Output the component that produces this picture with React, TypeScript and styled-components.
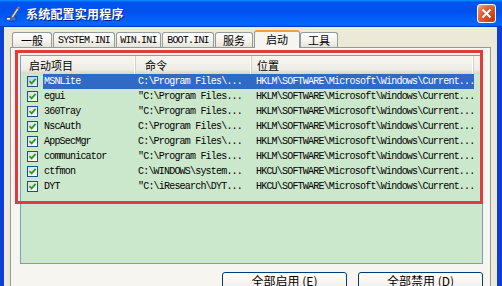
import * as React from 'react';
import styled, {createGlobalStyle, css} from 'styled-components';

const CJK = '"Noto Sans CJK SC", "Liberation Sans", sans-serif';
const MONO = '"Liberation Mono", "Noto Sans CJK SC", monospace';

const GlobalStyle = createGlobalStyle`
    html, body {
        margin: 0;
        padding: 0;
        background: #ffffff;
    }
    body {
        font-family: ${CJK};
    }
`;

const Window = styled.div`
    width: 502px;
    height: 286px;
    overflow: hidden;
    display: flex;
    flex-direction: column;
`;

const TitleBar = styled.div`
    height: 27px;
    flex-shrink: 0;
    display: flex;
    align-items: center;
    gap: 5px;
    padding: 0 6px 0 5px;
    box-sizing: border-box;
    background: linear-gradient(
        180deg,
        #0997ff 0%,
        #0053ee 8%,
        #0050ee 40%,
        #0066ff 88%,
        #0066ff 93%,
        #005bff 95%,
        #003dd7 96%,
        #003dd7 100%
    );
`;

const Title = styled.span`
    flex: 1;
    color: #ffffff;
    font: bold 12px ${CJK};
    text-shadow: 1px 1px 0 #0a1c7e;
    letter-spacing: 0.2px;
`;

const CloseButton = styled.div`
    width: 19px;
    height: 19px;
    box-sizing: border-box;
    border: 1px solid #ffffff;
    border-radius: 3px;
    display: flex;
    align-items: center;
    justify-content: center;
    background: radial-gradient(circle at 85% 85%, #c43a0e 0%, #dc5a2e 55%, #e5835d 80%, #f6c1a8 100%);
`;

const Frame = styled.div`
    flex: 1;
    min-height: 0;
    display: flex;
    flex-direction: column;
    background: #ece9d8;
    border-left: 4px solid #0b3fd6;
    border-right: 5px solid #0b3fd6;
    padding: 3px 6px 0 6px;
`;

const TabStrip = styled.div`
    height: 18px;
    display: flex;
    align-items: flex-end;
    padding-left: 2px;
    margin-bottom: -1px;
    position: relative;
    z-index: 1;
`;

const Tab = styled.div<{$w: number; $active?: boolean; $mono?: boolean; $gap?: number}>`
    width: ${(p) => p.$w}px;
    margin-right: ${(p) => (p.$gap ?? 1)}px;
    box-sizing: border-box;
    border: 1px solid #919b9c;
    border-radius: 3px 3px 0 0;
    display: flex;
    align-items: center;
    justify-content: center;
    color: #000000;
    font: ${(p) => (p.$mono ? `10px ${MONO}` : `11px ${CJK}`)};
    letter-spacing: ${(p) => (p.$mono ? '-0.8px' : '0')};
    ${(p) =>
        p.$active
            ? css`
                  height: 18px;
                  border-bottom: none;
                  border-top: 2px solid #f0a22e;
                  background: #f6f5ef;
                  padding-bottom: 2px;
              `
            : css`
                  height: 15px;
                  margin-bottom: 1px;
                  border-bottom: none;
                  background: linear-gradient(180deg, #ffffff 0%, #f3f2ec 60%, #e6e4da 100%);
              `}
`;

const Panel = styled.div`
    flex: 1;
    position: relative;
    border: 1px solid #919b9c;
    border-bottom: none;
    background: #f6f5ef;
    padding: 7px 7px 0 9px;
    display: flex;
    flex-direction: column;
`;

const Highlight = styled.div`
    position: absolute;
    left: 4px;
    top: 2px;
    width: 468px;
    height: 154px;
    box-sizing: border-box;
    border: 3px solid #e23b3b;
    pointer-events: none;
`;

const List = styled.div`
    height: 209px;
    box-sizing: border-box;
    border: 1px solid #7f9db9;
    background: #cce8cc;
`;

const Header = styled.div`
    display: grid;
    grid-template-columns: 115px 116px 222px 1fr;
    height: 18px;
    background: linear-gradient(180deg, #f7f6f1 0%, #eeede4 75%, #d8d4c5 100%);
`;

const HeaderCell = styled.div<{$pad: number}>`
    padding-left: ${(p) => p.$pad}px;
    font: 11px ${CJK};
    line-height: 18px;
    color: #000000;
    border-right: 1px solid #d6d2c2;
    box-shadow: inset -1px 0 0 #ffffff;
`;

const Row = styled.div`
    display: flex;
    height: 15px;
`;

const CheckSlot = styled.div`
    width: 22px;
    padding-left: 6px;
    box-sizing: border-box;
    display: flex;
    align-items: center;
`;

const CheckBox = styled.div<{$focus?: boolean}>`
    width: 11px;
    height: 11px;
    box-sizing: border-box;
    border: 1px solid #1c5180;
    display: flex;
    align-items: center;
    justify-content: center;
    background: ${(p) =>
        p.$focus ? 'linear-gradient(135deg, #b9cde0, #e8eef5)' : 'linear-gradient(135deg, #dcdcd7, #ffffff)'};
`;

const Cells = styled.div<{$selected?: boolean}>`
    display: grid;
    grid-template-columns: 93px 116px 222px;
    background: ${(p) => (p.$selected ? '#316ac5' : 'transparent')};
    color: ${(p) => (p.$selected ? '#ffffff' : '#000000')};
`;

const Cell = styled.div<{$pad: number}>`
    padding-left: ${(p) => p.$pad}px;
    font: 10px ${MONO};
    letter-spacing: -0.8px;
    line-height: 15px;
    white-space: nowrap;
    overflow: hidden;
`;

const ButtonRow = styled.div`
    display: flex;
    justify-content: flex-end;
    gap: 11px;
    margin-top: 8px;
`;

const Button = styled.div`
    width: 125px;
    height: 23px;
    box-sizing: border-box;
    border: 1px solid #003c74;
    border-radius: 3px;
    background: linear-gradient(180deg, #ffffff 0%, #f1efe8 70%, #d9d4c8 100%);
    display: flex;
    align-items: center;
    justify-content: center;
    padding-bottom: 5px;
    font: 12px ${CJK};
    line-height: 14px;
    color: #000000;
    u {
        text-decoration: underline;
    }
`;

const rows = [
    ['MSNLite', 'C:\\Program Files\\...', 'HKLM\\SOFTWARE\\Microsoft\\Windows\\Current...'],
    ['egui', '"C:\\Program Files...', 'HKLM\\SOFTWARE\\Microsoft\\Windows\\Current...'],
    ['360Tray', '"C:\\Program Files...', 'HKLM\\SOFTWARE\\Microsoft\\Windows\\Current...'],
    ['NscAuth', 'C:\\Program Files\\...', 'HKLM\\SOFTWARE\\Microsoft\\Windows\\Current...'],
    ['AppSecMgr', 'C:\\Program Files\\...', 'HKLM\\SOFTWARE\\Microsoft\\Windows\\Current...'],
    ['communicator', '"C:\\Program Files...', 'HKLM\\SOFTWARE\\Microsoft\\Windows\\Current...'],
    ['ctfmon', 'C:\\WINDOWS\\system...', 'HKCU\\SOFTWARE\\Microsoft\\Windows\\Current...'],
    ['DYT', '"C:\\iResearch\\DYT...', 'HKCU\\SOFTWARE\\Microsoft\\Windows\\Current...'],
];

function AppIcon() {
    return (
        <svg width="16" height="16" viewBox="0 0 16 16">
            <rect x="1" y="11" width="10" height="4" fill="#3d6fd8" stroke="#1b3f8f" strokeWidth="0.8" />
            <rect x="2" y="12" width="3" height="1.5" fill="#ffffff" />
            <path d="M6 11 L12 2 L14 3 L8 12 Z" fill="#d8d8d8" stroke="#555" strokeWidth="0.8" />
            <path d="M12 2 L13.5 0.5 L15 1.5 L14 3 Z" fill="#8a8a8a" />
        </svg>
    );
}

function Check() {
    return (
        <svg width="9" height="9" viewBox="0 0 9 9">
            <path d="M1.5 4.2 L3.6 6.4 L7.6 1.8" fill="none" stroke="#21a121" strokeWidth="1.8" />
        </svg>
    );
}

export default function App() {
    return (
        <Window>
            <GlobalStyle />
            <TitleBar>
                <AppIcon />
                <Title>系统配置实用程序</Title>
                <CloseButton>
                    <svg width="11" height="11" viewBox="0 0 11 11">
                        <path d="M1.5 1.5 L9.5 9.5 M9.5 1.5 L1.5 9.5" stroke="#ffffff" strokeWidth="2" />
                    </svg>
                </CloseButton>
            </TitleBar>
            <Frame>
                <TabStrip>
                    <Tab $w={40}>一般</Tab>
                    <Tab $w={62} $mono>
                        SYSTEM.INI
                    </Tab>
                    <Tab $w={45} $mono>
                        WIN.INI
                    </Tab>
                    <Tab $w={52} $mono>
                        BOOT.INI
                    </Tab>
                    <Tab $w={38}>服务</Tab>
                    <Tab $w={46} $active $gap={0}>
                        启动
                    </Tab>
                    <Tab $w={38}>工具</Tab>
                </TabStrip>
                <Panel>
                    <List>
                        <Header>
                            <HeaderCell $pad={8}>启动项目</HeaderCell>
                            <HeaderCell $pad={9}>命令</HeaderCell>
                            <HeaderCell $pad={5}>位置</HeaderCell>
                            <div />
                        </Header>
                        {rows.map((r, i) => (
                            <Row key={r[0]}>
                                <CheckSlot>
                                    <CheckBox $focus={i === 0}>
                                        <Check />
                                    </CheckBox>
                                </CheckSlot>
                                <Cells $selected={i === 0}>
                                    <Cell $pad={1}>{r[0]}</Cell>
                                    <Cell $pad={2}>{r[1]}</Cell>
                                    <Cell $pad={4}>{r[2]}</Cell>
                                </Cells>
                            </Row>
                        ))}
                    </List>
                    <ButtonRow>
                        <Button>
                            全部启用 (<u>E</u>)
                        </Button>
                        <Button>
                            全部禁用 (<u>D</u>)
                        </Button>
                    </ButtonRow>
                    <Highlight />
                </Panel>
            </Frame>
        </Window>
    );
}
